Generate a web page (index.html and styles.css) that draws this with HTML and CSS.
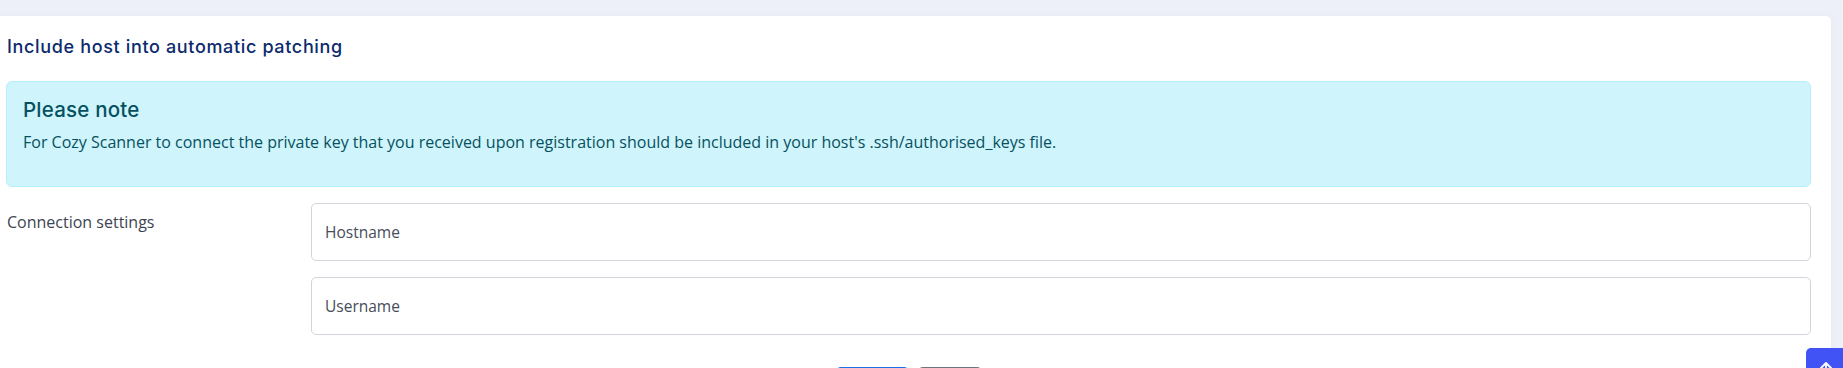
FILE: index.html
```html
<!DOCTYPE html>
<html>
<head>
    <title>Include host</title>
    <link rel="stylesheet" href="styles.css">
</head>
<body>
    <div class="card">
        <h2 class="card-title">Include host into automatic patching</h2>
        <div class="alert">
            <h4 class="alert-heading">Please note</h4>
            <p>For Cozy Scanner to connect the private key that you received upon registration should be included in your host's .ssh/authorised_keys file.</p>
        </div>
        <form class="host-form">
            <div class="form-row">
                <label class="form-label">Connection settings</label>
                <div class="fields">
                    <input type="text" class="form-control" placeholder="Hostname">
                    <input type="text" class="form-control" placeholder="Username">
                </div>
            </div>
            <div class="actions">
                <button type="submit" class="btn btn-primary">Submit</button>
                <button type="reset" class="btn btn-secondary">Reset</button>
            </div>
        </form>
    </div>
    <a class="scroll-top" href="#">
        <svg width="18" height="18" viewBox="0 0 24 24" fill="none" stroke="#fff" stroke-width="2.4" stroke-linecap="round" stroke-linejoin="round">
            <path d="M12 20V5"/>
            <path d="M5 11l7-7 7 7"/>
        </svg>
    </a>
</body>
</html>
```

FILE: styles.css
```css
* {
    padding: 0;
    margin: 0;
    box-sizing: border-box;
}
html, body {
    height: 100%;
    overflow: hidden;
}
body {
    font-family: "Open Sans", sans-serif;
    background-color: #eef0f9;
    color: #3d4451;
}
.card {
    margin: 16px 12px 0 0;
    padding: 19px 20px 40px 6px;
    background-color: #fff;
    border-radius: 0 5px 5px 0;
    box-shadow: 0 0 6px rgba(60, 70, 140, 0.06);
}
.card-title {
    font-family: "Inter", sans-serif;
    font-weight: 500;
    font-size: 18px;
    line-height: 24px;
    color: #0c2a6c;
    margin: 0 0 22px 1px;
    letter-spacing: 0.65px;
}
.alert {
    background-color: #cff4fc;
    border: 1px solid #b6effb;
    border-radius: 6px;
    padding: 16px 16px 32px 16px;
    color: #055160;
}
.alert-heading {
    font-family: "Inter", sans-serif;
    font-weight: 500;
    font-size: 20.5px;
    line-height: 24px;
    letter-spacing: 0.2px;
    margin-bottom: 8px;
}
.alert p {
    font-size: 16px;
    line-height: 24px;
}
.host-form {
    margin-top: 16px;
}
.form-row {
    display: grid;
    grid-template-columns: 305px 1fr;
}
.form-label {
    padding: 7px 0 0 1px;
    font-size: 16px;
    line-height: 24px;
    color: #3d4451;
}
.fields {
    display: flex;
    flex-direction: column;
    gap: 16px;
}
.form-control {
    height: 58px;
    padding: 0 13px;
    border: 1px solid #d2d6dc;
    border-radius: 5px;
    font-family: "Open Sans", sans-serif;
    font-size: 15.5px;
    color: #3d4451;
    outline: none;
}
.form-control::placeholder {
    color: #464d58;
}
.actions {
    display: flex;
    justify-content: center;
    gap: 11px;
    margin-top: 32px;
}
.btn {
    height: 38px;
    padding: 0 12px;
    border: none;
    border-radius: 4px;
    font-family: "Open Sans", sans-serif;
    font-size: 15px;
    color: #fff;
}
.btn-primary {
    width: 71px;
    background-color: #1c6fe3;
}
.btn-secondary {
    width: 62px;
    background-color: #6c757d;
}
.scroll-top {
    position: fixed;
    left: 1806px;
    top: 348px;
    width: 40px;
    height: 40px;
    background-color: #4153f4;
    border-radius: 5px 0 0 0;
    display: flex;
    justify-content: center;
    padding-top: 12px;
}
```
